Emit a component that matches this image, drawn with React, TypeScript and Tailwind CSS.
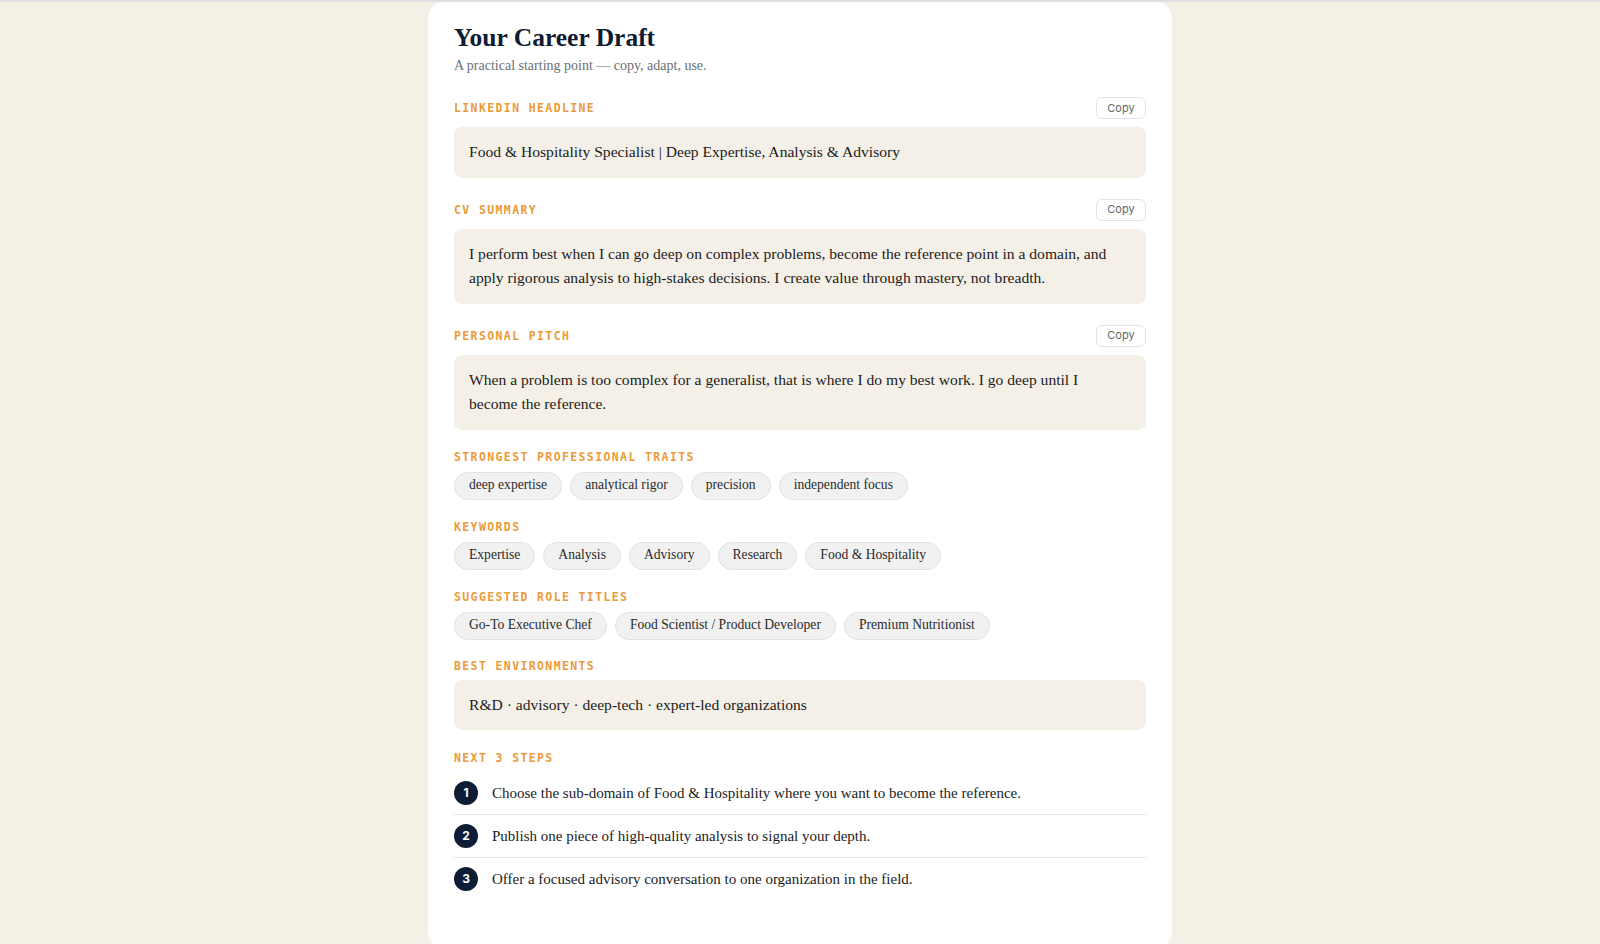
import { useState } from "react";

const serif = "font-['Liberation_Serif','Times_New_Roman',serif]";
const mono = "font-['DejaVu_Sans_Mono','Liberation_Mono',monospace]";

const headline =
  "Food & Hospitality Specialist | Deep Expertise, Analysis & Advisory";
const summary =
  "I perform best when I can go deep on complex problems, become the reference point in a domain, and apply rigorous analysis to high-stakes decisions. I create value through mastery, not breadth.";
const pitch =
  "When a problem is too complex for a generalist, that is where I do my best work. I go deep until I become the reference.";

const traits = ["deep expertise", "analytical rigor", "precision", "independent focus"];
const keywords = ["Expertise", "Analysis", "Advisory", "Research", "Food & Hospitality"];
const roles = ["Go-To Executive Chef", "Food Scientist / Product Developer", "Premium Nutritionist"];
const steps = [
  "Choose the sub-domain of Food & Hospitality where you want to become the reference.",
  "Publish one piece of high-quality analysis to signal your depth.",
  "Offer a focused advisory conversation to one organization in the field.",
];

function Label({ children }: { children: string }) {
  return (
    <h2
      className={`${mono} block text-[11.5px] leading-4 font-bold uppercase tracking-[0.12em] text-[#ec9a3a]`}
    >
      {children}
    </h2>
  );
}

function TextBox({ children }: { children: string }) {
  return (
    <div
      className={`${serif} rounded-lg bg-[#f4f0e7] py-[13px] pr-5 pl-[15px] text-[15.6px] leading-[24.5px] text-[#1c1c1c]`}
    >
      {children}
    </div>
  );
}

function CopyBlock({ label, text }: { label: string; text: string }) {
  const [copied, setCopied] = useState(false);
  return (
    <section className="mt-[21px]">
      <div className="mb-2 flex h-[22px] items-center justify-between">
        <Label>{label}</Label>
        <button
          type="button"
          onClick={() => {
            navigator.clipboard?.writeText(text).catch(() => {});
            setCopied(true);
            setTimeout(() => setCopied(false), 1200);
          }}
          className="h-[22px] w-[50px] rounded-md border border-[#e3e3e3] bg-white font-['Inter','Noto_Sans',sans-serif] text-[11px] text-[#666]"
        >
          {copied ? "Copied" : "Copy"}
        </button>
      </div>
      <TextBox>{text}</TextBox>
    </section>
  );
}

function ChipGroup({ label, items }: { label: string; items: string[] }) {
  return (
    <section className="mt-[19px]">
      <Label>{label}</Label>
      <div className="mt-[7px] flex flex-wrap gap-2">
        {items.map((item) => (
          <span
            key={item}
            className={`${serif} flex h-7 items-center rounded-full border border-[#e1e1e1] bg-[#f1f1f1] px-3.5 text-[13.6px] text-[#2a2a2a]`}
          >
            {item}
          </span>
        ))}
      </div>
    </section>
  );
}

export default function App() {
  return (
    <div className="min-h-screen border-t-2 border-[#e2dfe2] bg-[#f4f0e6]">
      <main className="mx-auto w-[744px] rounded-2xl bg-white px-[26px] pt-5 pb-12">
        <h1 className={`${serif} text-[25.5px] leading-8 font-bold text-[#0f1b33]`}>
          Your Career Draft
        </h1>
        <p className={`${serif} mt-0.5 text-[14px] leading-5 text-[#6b6f76]`}>
          A practical starting point — copy, adapt, use.
        </p>

        <CopyBlock label="LinkedIn Headline" text={headline} />
        <CopyBlock label="CV Summary" text={summary} />
        <CopyBlock label="Personal Pitch" text={pitch} />

        <ChipGroup label="Strongest Professional Traits" items={traits} />
        <ChipGroup label="Keywords" items={keywords} />
        <ChipGroup label="Suggested Role Titles" items={roles} />

        <section className="mt-[18px]">
          <Label>Best Environments</Label>
          <div className="mt-[6px]">
            <TextBox>R&amp;D · advisory · deep-tech · expert-led organizations</TextBox>
          </div>
        </section>

        <section className="mt-5">
          <Label>Next 3 Steps</Label>
          <ol className="mt-1.5">
            {steps.map((step, i) => (
              <li
                key={i}
                className="flex items-center gap-3.5 border-b border-[#e9e9e9] py-[9px] last:border-b-0"
              >
                <span className="flex h-6 w-6 shrink-0 items-center justify-center rounded-full bg-[#0f1c36] font-['Inter','Noto_Sans',sans-serif] text-[12px] font-bold text-white">
                  {i + 1}
                </span>
                <span className={`${serif} text-[15px] text-[#1c1c1c]`}>{step}</span>
              </li>
            ))}
          </ol>
        </section>
      </main>
    </div>
  );
}
